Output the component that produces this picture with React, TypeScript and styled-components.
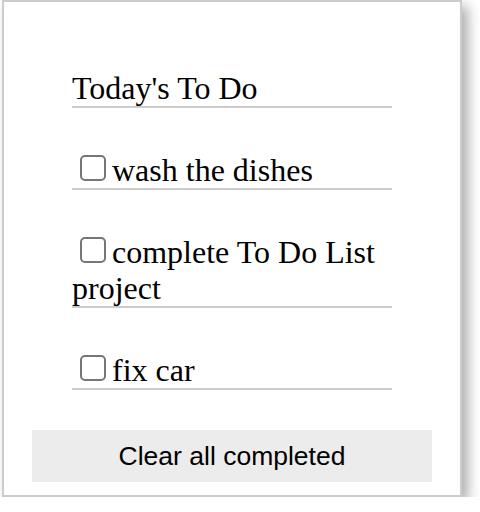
import React from "react";
import styled, { createGlobalStyle } from "styled-components";

const todos = ["wash the dishes", "complete To Do List project", "fix car"];

const App = () => {
  return (
    <>
      <GlobalStyle />
      <Card>
        <List>
          <Title>Today's To Do</Title>
          {todos.map((t) => (
            <Item key={t}>
              <Check type="checkbox" />
              {t}
            </Item>
          ))}
        </List>
        <ClearButton>Clear all completed</ClearButton>
      </Card>
    </>
  );
};

const GlobalStyle = createGlobalStyle`
  body {
    margin: 0;
    background: #fff;
    font-family: "Liberation Serif", "Times New Roman", serif;
  }
`;

const Card = styled.div`
  box-sizing: border-box;
  width: 460px;
  height: 497px;
  margin-left: 2px;
  border: 2px solid #ccc;
  background: #fff;
  box-shadow: 6px 6px 12px rgba(0, 0, 0, 0.32);
  display: flex;
  flex-direction: column;
  align-items: center;
  padding-top: 68px;
`;

const List = styled.div`
  width: 320px;
  display: flex;
  flex-direction: column;
  gap: 44px;
`;

const Title = styled.div`
  font-size: 32px;
  line-height: 36px;
  color: #000;
  border-bottom: 2px solid #ccc;
`;

const Item = styled.label`
  display: block;
  font-size: 32px;
  line-height: 36px;
  color: #000;
  border-bottom: 2px solid #ccc;
`;

const Check = styled.input`
  appearance: none;
  box-sizing: border-box;
  width: 26px;
  height: 26px;
  margin: 0 6px 0 8px;
  border: 2px solid #767676;
  border-radius: 5px;
  background: #fff;
  vertical-align: 0;
`;

const ClearButton = styled.button`
  margin-top: 40px;
  width: 400px;
  height: 52px;
  border: none;
  background: #ececec;
  color: #000;
  font-family: "Liberation Sans", Arial, sans-serif;
  font-size: 26.5px;
  padding: 0;
`;

export default App;
